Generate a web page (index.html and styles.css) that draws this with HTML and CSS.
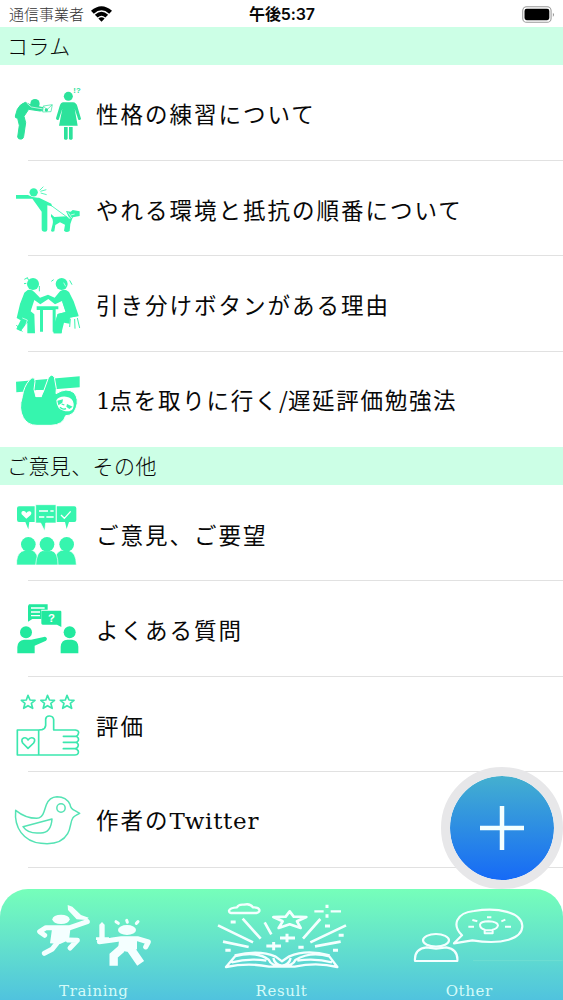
FILE: index.html
```html
<!DOCTYPE html>
<html lang="ja">
<head>
<meta charset="utf-8">
<title>Other</title>
<link rel="stylesheet" href="styles.css">
</head>
<body>
<div class="app">
  <header class="status">
    <div class="carrier"><span class="carrier-name">通信事業者</span>
      <svg class="wifi" viewBox="0 0 60 44"><path d="M0 13Q30-13 60 13L52 21Q30 2 8 21ZM11 24Q30 7 49 24L41 32Q30 22 19 32ZM21 35Q30 28 39 35L30 44Z"/></svg>
    </div>
    <div class="clock">午後5:37</div>
    <svg class="battery" viewBox="0 0 93 48"><rect x="2" y="2" width="80" height="44" rx="11" fill="#fff" stroke="#999" stroke-width="3"/><rect x="7" y="8" width="70" height="32" rx="6"/><path d="M87 19Q94 25 87 31Z" fill="#999"/></svg>
  </header>

  <h2 class="section">コラム</h2>
  <ul class="list">
    <li class="row">
      <svg class="icon" viewBox="0 -33 288 285">
        <g fill="#2ce29b"><circle cx="105" cy="83" r="14"/><path d="M76 79Q60 84 52 100L46 120Q44 126 53 127L58 148L53 183Q54 191 65 189Q70 188 71 181L77 140L72 121L86 100L120 105L133 103L134 96L120 93L88 85Z" stroke="#2ce29b" stroke-width="3"/><circle cx="205" cy="61" r="13.500"/><path d="M190 79H219Q229 80 232 91L243 128Q241 134 235 131L224 98L233 149H177L187 98L176 131Q169 134 168 127L179 90Q182 80 190 79ZM192 153H203V188Q197 195 192 188ZM207 153H218V188Q212 195 207 188Z"/></g>
        <path d="M80 81L94 93L130 99" fill="none" stroke="#fff" stroke-width="2"/>
        <path d="M130 90L157 86L153 107L128 108ZM131 91L141 101L156 87" fill="#fff" stroke="#2ce29b" stroke-width="2"/><circle cx="139" cy="102" r="5" fill="#2ce29b"/>
        <text x="220" y="51" class="mark">!?</text>
      </svg><span class="label">性格の練習について</span>
    </li>
    <li class="row">
      <svg class="icon" viewBox="0 -46 288 285">
        <g fill="#36f5ae"><path d="M48 56H84Q97 65 117 64L154 82L156 90L142 87V160Q141 167 134 166Q125 166 125 158V106L97 67H48Z"/><circle cx="101" cy="48" r="12.500"/><path d="M153 113L163 122L199 120L207 127L217 126L211 143L209 164Q199 170 192 163L195 145L180 138L166 146L163 165Q155 168 153 163L158 143Q161 129 153 121ZM205 120L198 104L212 106L218 101L239 105V119L219 123L215 130Z"/></g>
        <path d="M150 85L209 128M119 42L130 31M121 45L139 40M122 50L140 55" fill="none" stroke="#36f5ae" stroke-width="2.500"/>
        <path d="M204 108L215 125M212 116L224 113" stroke="#fff" stroke-width="2" fill="none"/>
      </svg><span class="label">やれる環境と抵抗の順番について</span>
    </li>
    <li class="row">
      <svg class="icon" viewBox="0 -26 288 285">
        <g fill="#36f5ae"><circle cx="99" cy="58" r="18"/><circle cx="185" cy="58" r="18"/><path d="M83 76Q95 73 103 82L120 99L144 90L164 99L180 80Q193 70 207 82L221 110L236 153L212 159L188 155L185 206H161V187L173 148L197 142L186 109L165 119L145 103L121 119L103 106L92 140L103 149L105 206H82V174L62 200L49 193L62 167L50 160L60 118L73 84Z"/><path d="M110 125H175V134H167V201H158V136H129V201H120V136H110Z"/><path d="M186 109L197 142L173 148L161 187V206H184L192 174L209 177L210 158L236 155Z"/></g>
        <path d="M211 162L209 187M224 163L225 192M232 160L239 190M54 196L78 160M49 181L67 201M73 44L83 39M72 57L79 56M118 64V80M154 50L161 45M209 47L216 60M82 39L86 47" stroke="#36f5ae" stroke-width="3"/>
        <path d="M67 160L82 166L75 188M191 54L197 65" fill="none" stroke="#fff" stroke-width="2"/>
      </svg><span class="label">引き分けボタンがある理由</span>
    </li>
    <li class="row">
      <svg class="icon" viewBox="0 -40 288 285">
        <path d="M48 49L239 33V66L49 81Z" fill="#36f5ae"/>
        <path d="M95 38Q105 35 105 49L102 72L108 95H123L131 77L145 38Q155 22 163 36L169 70L168 85Q200 65 222 82Q238 101 228 128Q220 151 197 151Q189 179 153 180H111Q83 180 70 157Q55 130 67 94Q72 62 88 45Z" fill="#36f5ae" stroke="#fff" stroke-width="3"/>
        <path d="M106 74H129L124 96H108Z" fill="#fff"/><path d="M106 98H123" stroke="#36f5ae" stroke-width="5"/>
        <path d="M169 105Q177 92 198 94Q219 97 221 115Q223 132 208 138Q188 139 176 128Q169 118 169 105Z" fill="#fff"/>
        <path d="M172 106L189 102L187 112L175 120ZM201 116L218 124L208 131L199 124Z" fill="#36f5ae"/><path d="M185 116L193 119M180 126Q188 134 198 130" stroke="#36f5ae" stroke-width="4" fill="none"/>
      </svg><span class="label tight"><span class="latin">1</span>点を取りに行く<span class="slash">/</span>遅延評価勉強法</span>
    </li>
  </ul>

  <h2 class="section">ご意見、その他</h2>
  <ul class="list">
    <li class="row">
      <svg class="icon" viewBox="0 120 288 285">
        <g fill="#36f5ae"><path d="M57 181H104V228H88L85 250L76 228H57Q51 228 51 221V187Q51 181 57 181ZM174 181H223Q229 181 229 187V222Q229 228 223 228H207L200 249L195 228H170V181Z"/><path d="M107 176H168V231H137L134 255L122 231H107Z" stroke="#fff" stroke-width="2"/><g stroke="#fff" stroke-width="2"><path d="M50 357V344Q53 318 74 313H97Q113 317 117 357ZM160 357Q163 321 183 313H205Q229 319 229 357Z"/><path d="M107 357Q110 317 127 314H155Q174 318 174 357Z"/></g><circle cx="85" cy="295" r="22"/><circle cx="200" cy="295" r="22"/><circle cx="141" cy="295" r="22"/></g>
        <path d="M79 218L65 205Q62 196 70 195Q76 194 79 201Q83 194 90 196Q97 200 92 207Z" fill="#fff"/><path d="M183 207L193 217L212 196M117 195H144M151 195H161M117 213H133M139 213H161" fill="none" stroke="#fff" stroke-width="4"/>
      </svg><span class="label">ご意見、ご要望</span>
    </li>
    <li class="row">
      <svg class="icon" viewBox="0 -28 288 285">
        <g fill="#22e99e"><path d="M87 42H143V58H124V86H97L84 94V47Z"/><path d="M128 61H181Q184 61 184 65V110L171 103H128Q124 103 124 99V65Q124 61 128 61Z"/><circle cx="78" cy="126" r="18"/><path d="M52 189V170Q53 150 72 148H93L135 139Q145 143 138 151L104 166V189Z"/><circle cx="209" cy="126" r="18"/><path d="M182 189V169Q184 148 202 148H216Q234 150 235 169V189Z"/></g><path d="M93 53H134M93 65H120M93 76H120" stroke="#fff" stroke-width="4"/><text x="144" y="95" class="question">?</text>
      </svg><span class="label">よくある質問</span>
    </li>
    <li class="row">
      <svg class="icon" viewBox="0 -27 288 285">
        <g fill="none" stroke="#3be7ae" stroke-width="5" stroke-linejoin="round" stroke-linecap="round"><path d="M52 207V132H116L126 131Q136 128 137 118V99Q139 89 149 90Q160 91 161 101V132H226Q239 134 235 143Q233 151 227 151H190M227 151Q238 155 235 163Q232 170 225 169H190M226 169Q238 173 234 181Q232 188 225 188H190M226 188Q239 193 234 203Q232 207 225 207H52M116 132V207"/><path d="M84 187L68 171Q62 160 71 156Q80 153 84 162Q90 153 99 156Q108 160 101 171Z"/><path id="rating-star" d="M84 28L90 42L105 43L94 52L98 67L84 59L71 67L75 52L64 43L79 42Z"/><use href="#rating-star" x="58.500"/><use href="#rating-star" x="117"/></g>
      </svg><span class="label">評価</span>
    </li>
    <li class="row">
      <svg class="icon" viewBox="0 -40 288 285"><g fill="none" stroke="#55e3b4" stroke-width="4.500" stroke-linejoin="round"><path d="M47 75Q77 99 110 99Q126 98 132 79L139 58Q148 35 171 34Q199 34 210 57Q212 71 225 76L239 84Q223 92 219 97C210 110 214 127 203 145C188 171 157 178 123 174C70 168 42 127 47 75Z"/><circle cx="183" cy="68" r="12.500"/><path d="M69 124L156 101Q153 145 119 143Q84 146 69 124Z"/></g></svg>
      <span class="label">作者の<span class="latin">Twitter</span></span>
    </li>
  </ul>

  <button class="fab" aria-label="追加"><svg viewBox="0 0 44 44"><path d="M22 0V44M0 22H44" stroke="#f4ffff" stroke-width="4.500"/></svg></button>

  <nav class="tabs">
    <a class="tab"><svg class="tab-icon" viewBox="0 27 563 270">
      <g fill="#f4ffff"><ellipse cx="183" cy="118" rx="26" ry="14"/><ellipse cx="381" cy="150" rx="27" ry="15"/><path d="M203 75L217 80L243 105L266 113L259 120L230 118L204 90Z"/><path d="M298 134L306 126L314 134V172H327V180H288V172H298Z"/></g>
      <g fill="none" stroke="#f4ffff" stroke-width="15" stroke-linecap="round" stroke-linejoin="round"><path d="M262 125L210 143H138L119 155L134 166M205 180L232 181L210 204M172 188L156 208L133 220M298 185L332 181L364 176H412L445 186L437 201"/></g>
      <path d="M157 140H212L207 180L180 192L150 190ZM358 172H411V208L385 216L354 210Z" fill="#f4ffff"/>
      <path d="M365 206L341 227V257M393 208L422 250" fill="none" stroke="#f4ffff" stroke-width="25"/>
      <path d="M348 125L355 130M380 121L382 127M409 130L414 125" stroke="#f4ffff" stroke-width="9" stroke-linecap="round"/>
    </svg><span class="tab-label">Training</span></a>
    <a class="tab"><svg class="tab-icon" viewBox="-37 27 563 270"><g fill="none" stroke="#f4ffff" stroke-width="7" stroke-linejoin="round">
      <path d="M92 99H168Q179 97 177 89Q174 81 158 82Q149 69 131 74Q114 72 110 82Q89 83 86 92Q86 98 92 99Z"/><path d="M268 94L280 110L318 111L290 124L301 144L268 133L235 144L247 124L219 111L256 110Z" stroke-width="8"/>
      <path d="M53 136L158 187M127 116L181 176M193 127L213 163M308 176L360 117M330 187L437 136M68 185L145 201M344 199L421 185" stroke-width="8"/>
      <path d="M391 94H422M342 94H370"/><path d="M380 74V84M380 103V113M260 161V187M239 174H284M220 186V211M198 198H242M91 126H106M75 211H91M294 202H310M374 138H389M415 166H430M398 211H413" stroke-width="9"/>
      <path d="M77 261L105 228Q169 212 205 239Q212 258 245 258Q278 258 285 240Q329 213 387 229L411 261Q350 246 283 260H206Q145 247 77 261ZM103 226Q177 208 226 230L245 244L267 229Q318 207 388 226M219 234Q223 254 245 257M271 234Q267 254 245 257M94 247Q145 234 198 242M395 247Q345 234 291 242"/></g>
    </svg><span class="tab-label">Result</span></a>
    <a class="tab"><svg class="tab-icon" viewBox="526 27 563 270"><path d="M820 242H1089" stroke="#79e1d2" stroke-width="2"/><g fill="none" stroke="#f4ffff" stroke-width="6.500" stroke-linejoin="round"><ellipse cx="709" cy="181" rx="39" ry="19"/><path d="M646 243Q643 206 681 202L709 206L740 202Q776 208 773 243ZM763 190L787 166C758 138 766 99 823 93C896 81 966 97 968 138C968 175 909 196 818 181Z"/><path d="M855 149Q841 145 841 134Q843 124 867 124Q893 125 895 136Q893 146 879 149V160H855ZM855 151H881M862 112H875M818 120L833 124M806 140H823M905 124L917 119M916 140H934" stroke-width="6"/></g></svg><span class="tab-label">Other</span></a>
  </nav>
</div>
</body>
</html>
```
FILE: styles.css
```css
* { box-sizing: border-box; }
body { margin: 0; background: #fff; color: #080808; font-family: "Noto Sans CJK JP", sans-serif; }
.app { position: relative; height: 1000px; display: flex; flex-direction: column; overflow: hidden; }
.status { height: 27px; flex: none; display: grid; grid-template-columns: 1fr auto 1fr; align-items: center; padding: 1px 8px 0 9px; }
.carrier { display: flex; align-items: center; gap: 7px; }
.carrier-name { font-size: 15px; line-height: 26px; font-weight: 300; color: #333; }
.wifi { width: 21px; height: 16px; }
.clock { font-family: "Inter", "Noto Sans CJK JP", sans-serif; font-size: 16px; font-weight: 600; line-height: 26px; letter-spacing: -.1px; }
.battery { width: 33px; height: 17px; justify-self: end; }
.section { flex: none; margin: 0; height: 38px; padding-left: 7px; background: #ccffe6; font-size: 21px; font-weight: 300; line-height: 37px; letter-spacing: .4px; }
.list { margin: 0; padding: 0; list-style: none; flex: none; }
.row { position: relative; display: flex; align-items: center; height: 95.6px; }
.row::after { content: ""; position: absolute; left: 28px; right: 0; bottom: 0; height: 1px; background: #e1e1e1; }
.list:first-of-type .row:last-child::after { display: none; }
.icon { width: 96px; height: 95px; flex: none; }
.label { font-size: 22.5px; line-height: 36px; letter-spacing: 2px; white-space: nowrap; padding-top: 1px; }
.tight { letter-spacing: 1.7px; }
.slash { letter-spacing: 0; }
.latin { font-family: "DejaVu Serif", serif; font-weight: 300; font-size: 23px; letter-spacing: .7px; }
.tight .latin { letter-spacing: -1px; }
.mark { font: bold 23px "Liberation Sans", sans-serif; fill: #2ce29b; }
.question { font: bold 34px "Liberation Sans", sans-serif; fill: #fff; }
.fab { position: absolute; z-index: 2; left: 440.5px; top: 766.5px; width: 122px; height: 122px; padding: 0; border: 9px solid #e7e7e9; border-radius: 50%; background: linear-gradient(#48b6cc, #1264fa) border-box; background-clip: padding-box; display: grid; place-items: center; }
.fab svg { width: 44px; height: 44px; }
.tabs { position: absolute; left: 0; right: 0; bottom: 0; height: 111px; display: flex; border-radius: 28px 28px 0 0; background: linear-gradient(#76ffba, #50c3de); }
.tab { flex: 1 1 0; min-width: 0; display: flex; flex-direction: column; align-items: center; }
.tab-icon { width: 100%; height: 90px; flex: none; }
.tab-label { margin-top: 3px; font-family: "DejaVu Serif", serif; font-weight: 300; font-size: 15px; line-height: 18px; letter-spacing: .6px; color: #d5fbf8; white-space: nowrap; }
```
